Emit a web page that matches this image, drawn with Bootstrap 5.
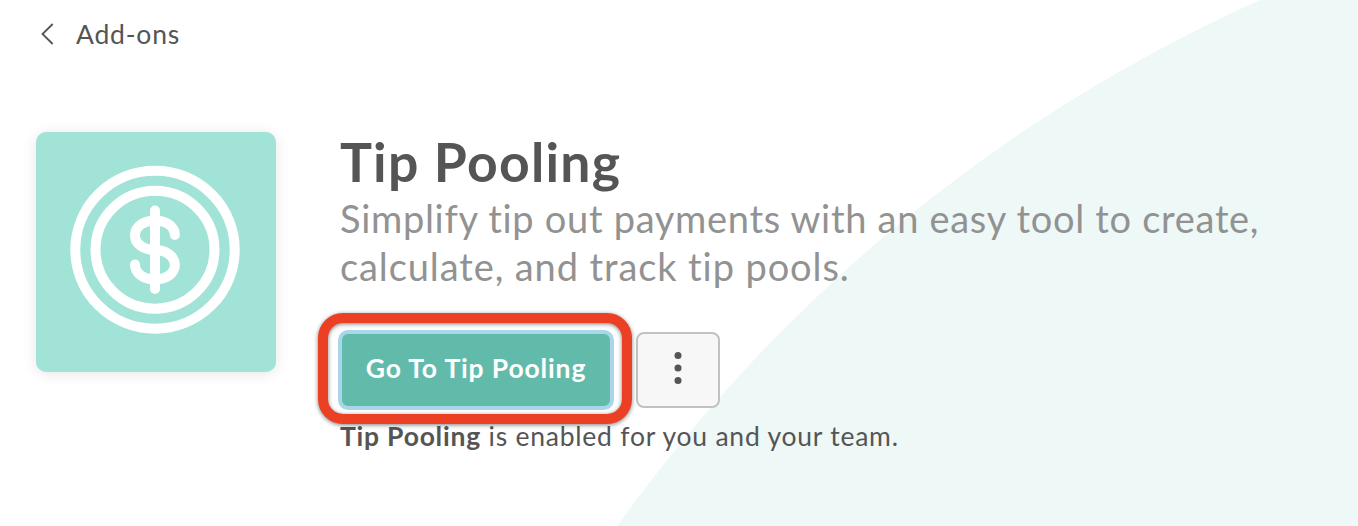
<!DOCTYPE html>
<html lang="en">
<head>
<meta charset="utf-8">
<meta name="viewport" content="width=device-width, initial-scale=1">
<title>Tip Pooling</title>
<link href="https://cdn.jsdelivr.net/npm/bootstrap@5.3.0/dist/css/bootstrap.min.css" rel="stylesheet">
<style>
  body { font-family: Lato, "Open Sans", sans-serif; color: #555; background: #fff; font-variant-ligatures: none; }
  .page { height: 526px; padding: 15px 36px 0; isolation: isolate; }
  .backdrop { left: 321px; top: -139px; width: 3178px; height: 3178px; border-radius: 50%; background: #eef8f7; z-index: -1; }
  .back-link { color: #555; font-size: 26.500px; line-height: 38px; letter-spacing: .8px; }
  .addon-header { margin-top: 79px; gap: 64px; }
  .tile { width: 240px; height: 240px; border-radius: 10px; background: #a1e3d7; box-shadow: 0 2px 14px rgba(0,0,0,.1); }
  .addon-title { font-size: 53.500px; line-height: 60px; font-weight: 700; letter-spacing: 1.25px; margin-top: -1px; }
  .addon-lead { font-size: 38px; line-height: 48px; color: #929292; letter-spacing: .7px; padding-top: 3px; }
  .lead-end { letter-spacing: .9px; }
  .actions { margin-top: 42px; gap: 24px; }
  .btn.go { width: 272px; height: 76px; border: 2px solid #a9d6e8; border-radius: 8px; background: #62bbaa; color: #fff; font-size: 26.500px; font-weight: 700; letter-spacing: .85px; padding: 0 0 2px; box-shadow: 0 0 0 2px #a9d6e8; }
  .btn.more { width: 84px; height: 76px; border: 2px solid #c1c1c1; border-radius: 8px; background: #f7f7f7; padding: 0; }
  .highlight { left: -22px; top: -19px; width: 314px; height: 111px; border: 10px solid #ec4025; border-radius: 25px; filter: drop-shadow(0 1px 2px rgba(0,0,0,.5)); pointer-events: none; }
  .status { font-size: 26.500px; line-height: 38px; margin-top: 9px; letter-spacing: .77px; }
</style>
</head>
<body>
<main class="page position-relative overflow-hidden">
  <div class="backdrop position-absolute"></div>
  <nav class="d-flex">
    <a href="#" class="back-link d-flex align-items-center text-decoration-none">
      <svg class="me-4" width="16" height="24" viewBox="0 0 16 24" fill="none" stroke="#555" stroke-width="1.800" overflow="visible"><path d="M16.700 2 6.500 12l10.200 10"/></svg>
      <span>Add-ons</span>
    </a>
  </nav>
  <header class="addon-header d-flex align-items-start">
    <div class="tile flex-shrink-0">
      <svg width="240" height="240" viewBox="0 0 240 240" fill="none" stroke="#fff" stroke-width="10" stroke-linecap="round">
        <ellipse cx="119" cy="117.700" rx="79.700" ry="79"/>
        <ellipse cx="119" cy="117.700" rx="59.500" ry="59"/>
        <path d="M119 78.500V157M138.800 103C138.800 94 129.500 88.500 119 88.500S99 94 99 103.300 108.500 118 119 118 138.800 124 138.800 133 129.500 147.500 119 147.500 99 142 99 132.500"/>
      </svg>
    </div>
    <section class="flex-grow-1">
      <h1 class="addon-title mb-0">Tip Pooling</h1>
      <p class="addon-lead mb-0">Simplify tip out payments with an easy tool to create,<br><span class="lead-end">calculate, and track tip pools.</span></p>
      <div class="actions d-flex">
        <div class="position-relative">
          <button type="button" class="btn go">Go To Tip Pooling</button>
          <div class="highlight position-absolute"></div>
        </div>
        <button type="button" class="btn more d-flex align-items-center justify-content-center" aria-label="More options">
          <svg class="mb-1" width="8" height="34" viewBox="0 0 8 34" fill="#555"><circle cx="4" cy="4.500" r="3.500"/><circle cx="4" cy="17" r="3.500"/><circle cx="4" cy="29.500" r="3.500"/></svg>
        </button>
      </div>
      <p class="status mb-0"><strong>Tip Pooling</strong> <span>is enabled for you and your team.</span></p>
    </section>
  </header>
</main>
<script src="https://cdn.jsdelivr.net/npm/bootstrap@5.3.0/dist/js/bootstrap.bundle.min.js"></script>
</body>
</html>
